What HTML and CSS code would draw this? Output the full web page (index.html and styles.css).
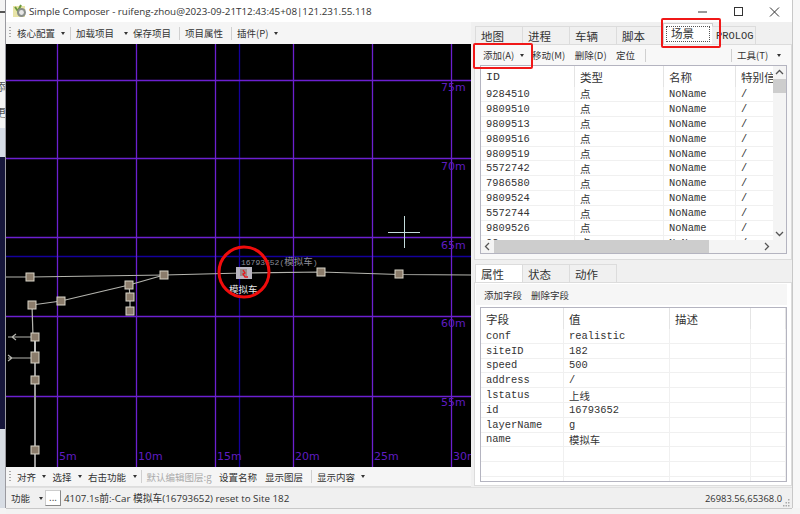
FILE: index.html
```html
<!DOCTYPE html>
<html lang="zh-CN">
<head>
<meta charset="utf-8">
<title>Simple Composer</title>
<link rel="stylesheet" href="styles.css">
</head>
<body>
<div class="screen">
  <div class="upper">
    <div class="strip">
      <div class="strip-top"><span class="peek">添</span><span class="peek">更</span></div>
      <div class="strip-pale"></div>
      <div class="strip-dark"></div>
      <div class="strip-light"></div>
    </div>
    <div class="window">
      <header class="titlebar">
        <svg class="appicon" width="14" height="14" viewBox="0 0 14 14"><rect x="0" y="2" width="12" height="11" fill="#e8e4a8"/><path d="M2 3l3 4 3-6" stroke="#6b9a3c" stroke-width="2" fill="none"/><circle cx="8.500" cy="8.500" r="4.500" fill="#8a8f8a"/><circle cx="8.500" cy="8.500" r="2.400" fill="#e8e8e8"/></svg>
        <span class="title">Simple Composer - ruifeng-zhou@2023-09-21T12:43:45+08|121.231.55.118</span>
        <div class="winbtns">
          <svg width="36" height="22" viewBox="0 0 36 22"><path d="M14 12h9" stroke="#333"/></svg>
          <svg width="36" height="22" viewBox="0 0 36 22"><rect x="14.500" y="7.500" width="8" height="8" fill="none" stroke="#333"/></svg>
          <svg width="36" height="22" viewBox="0 0 36 22"><path d="M14 7.500l9 9M23 7.500l-9 9" stroke="#333"/></svg>
        </div>
      </header>
      <div class="content">
        <section class="left">
          <div class="toolbar tb-top">
            <i class="grip"></i>
            <span class="tool t-core">核心配置<b class="caret"></b></span><i class="sep"></i>
            <span class="tool t-load">加载项目<b class="caret"></b></span>
            <span class="tool">保存项目</span><i class="sep"></i>
            <span class="tool">项目属性</span><i class="sep"></i>
            <span class="tool t-plugin">插件(P)<b class="caret"></b></span>
          </div>
          <svg class="map" width="465" height="423" viewBox="6 44 465 423">
            <g stroke="#14009c" stroke-width="1.300"><path d="M239.500 44v423M6 256.500h465"/></g>
            <g stroke="#6c20d0" stroke-width="1.300"><path d="M57.500 44v423M136.500 44v423M215.500 44v423M293.500 44v423M372.500 44v423M451.500 44v423M6 80.500h465M6 158.500h465M6 237.500h465M6 316.500h465M6 396.500h465"/></g>
            <g fill="#5f1cc0" font-size="11">
              <text x="441" y="91">75m</text><text x="441" y="170">70m</text><text x="441" y="249">65m</text><text x="441" y="327">60m</text><text x="441" y="406">55m</text>
              <text x="59" y="460">5m</text><text x="138" y="460">10m</text><text x="217" y="460">15m</text><text x="295" y="460">20m</text><text x="374" y="460">25m</text><text x="453" y="460">30m</text>
            </g>
            <g stroke="#b4b4ae" stroke-width="1.200" fill="none">
              <path d="M6 277H30L164 275 243 273 321 272 399 274.500 471 275"/>
              <path d="M32 305L61 301 129 285 164 275"/>
              <path d="M129 285L130 297V311"/>
              <path d="M32 305L33 337"/>
              <path d="M35 337H8M16 334l-4 3 4 3"/>
              <path d="M35 358H8M8 355l4 3-4 3"/>
              <path d="M35 337V358" stroke="#fff" stroke-width="1.500"/>
              <path d="M35 358V467" stroke="#999" stroke-width="2"/>
            </g>
            <g fill="#8b7c6b" stroke="#d8d4c8" stroke-width="1">
              <rect x="26" y="273" width="8" height="8"/><rect x="160" y="271" width="8" height="8"/><rect x="125" y="281" width="8" height="8"/><rect x="126" y="293" width="8" height="8"/><rect x="126" y="307" width="8" height="8"/><rect x="28" y="301" width="8" height="8"/><rect x="57" y="297" width="8" height="8"/><rect x="31" y="333" width="8" height="8"/><rect x="31" y="352" width="8" height="11"/><rect x="31" y="376" width="8" height="8"/><rect x="31" y="446" width="8" height="8"/><rect x="317" y="268" width="8" height="8"/><rect x="395" y="270" width="8" height="8"/>
            </g>
            <path d="M404.500 216V248M388 232.500H420" stroke="#c4dcdc" stroke-width="1"/>
            <rect x="236" y="267" width="16" height="12" fill="#b9b5c0"/>
            <rect x="240" y="269" width="7" height="7" fill="#9a8a88"/>
            <path d="M243 270l2 3-2 1 2 3h3" stroke="#e8141c" stroke-width="1.300" fill="none"/>
            <text class="carid" x="241" y="265">16793652(<tspan class="carid-cjk">模拟车</tspan>)</text>
            <text class="carname" x="229" y="293">模拟车</text>
            <circle cx="244" cy="272" r="25" fill="none" stroke="#f00c0c" stroke-width="3"/>
          </svg>
          <div class="toolbar tb-bottom">
            <i class="grip"></i>
            <span class="tool t-short">对齐<b class="caret"></b></span>
            <span class="tool t-short">选择<b class="caret"></b></span>
            <span class="tool t-right">右击功能<b class="caret"></b></span><i class="sep"></i>
            <span class="tool muted">默认编辑图层:g</span>
            <span class="tool">设置名称</span>
            <span class="tool">显示图层</span><i class="sep"></i>
            <span class="tool t-show">显示内容<b class="caret"></b></span>
          </div>
        </section>
        <section class="right">
          <div class="tabs tabs-top">
            <span class="tab">地图</span><span class="tab">进程</span><span class="tab">车辆</span><span class="tab">脚本</span><span class="tab tab-current"><span class="focus">场景</span></span><span class="tab tab-last">PROLOG</span>
          </div>
          <div class="pane pane-top">
            <div class="panebar panebar-top">
              <span class="tool tool-first">添加(A)<b class="caret"></b></span>
              <span class="tool">移动(M)</span>
              <span class="tool">删除(D)</span>
              <span class="tool">定位</span><i class="sep"></i>
              <span class="spacer"></span><i class="sep"></i>
              <span class="tool tool-last">工具(T)<b class="caret"></b></span>
            </div>
            <div class="listbox">
              <div class="listmain">
                <div class="cells head cols-a"><span>ID</span><span>类型</span><span>名称</span><span>特别信</span></div>
                <div class="cells cols-a"><span>9284510</span><span>点</span><span>NoName</span><span>/</span></div>
                <div class="cells cols-a"><span>9809510</span><span>点</span><span>NoName</span><span>/</span></div>
                <div class="cells cols-a"><span>9809513</span><span>点</span><span>NoName</span><span>/</span></div>
                <div class="cells cols-a"><span>9809516</span><span>点</span><span>NoName</span><span>/</span></div>
                <div class="cells cols-a"><span>9809519</span><span>点</span><span>NoName</span><span>/</span></div>
                <div class="cells cols-a"><span>5572742</span><span>点</span><span>NoName</span><span>/</span></div>
                <div class="cells cols-a"><span>7986580</span><span>点</span><span>NoName</span><span>/</span></div>
                <div class="cells cols-a"><span>9809524</span><span>点</span><span>NoName</span><span>/</span></div>
                <div class="cells cols-a"><span>5572744</span><span>点</span><span>NoName</span><span>/</span></div>
                <div class="cells cols-a"><span>9809526</span><span>点</span><span>NoName</span><span>/</span></div>
                <div class="cells cols-a"><span>98</span><span>点</span><span>NoName</span><span>/</span></div>
              </div>
              <div class="vscroll">
                <svg width="13" height="13" viewBox="0 0 13 13"><path d="M3 8l3.500-3.500L10 8" fill="none" stroke="#555" stroke-width="1.300"/></svg>
                <div class="vtrack"><div class="vthumb"></div></div>
                <svg width="13" height="13" viewBox="0 0 13 13"><path d="M3 5l3.500 3.500L10 5" fill="none" stroke="#555" stroke-width="1.300"/></svg>
              </div>
              <div class="hscroll">
                <svg width="13" height="13" viewBox="0 0 13 13"><path d="M8 3L4.500 6.500 8 10" fill="none" stroke="#555" stroke-width="1.300"/></svg>
                <div class="hthumb"></div>
                <span class="spacer"></span>
                <svg class="hnext" width="13" height="13" viewBox="0 0 13 13"><path d="M5 3l3.500 3.500L5 10" fill="none" stroke="#555" stroke-width="1.300"/></svg>
              </div>
            </div>
          </div>
          <div class="tabs tabs-lower">
            <span class="tab tab-active">属性</span><span class="tab">状态</span><span class="tab">动作</span>
          </div>
          <div class="pane pane-lower">
            <div class="panebar panebar-lower">
              <span class="tool">添加字段</span>
              <span class="tool">删除字段</span>
            </div>
            <div class="fieldbox">
              <div class="cells head cols-b"><span>字段</span><span>值</span><span>描述</span><span></span></div>
              <div class="cells cols-b"><span>conf</span><span>realistic</span><span></span><span></span></div>
              <div class="cells cols-b"><span>siteID</span><span>182</span><span></span><span></span></div>
              <div class="cells cols-b"><span>speed</span><span>500</span><span></span><span></span></div>
              <div class="cells cols-b"><span>address</span><span>/</span><span></span><span></span></div>
              <div class="cells cols-b"><span>lstatus</span><span>上线</span><span></span><span></span></div>
              <div class="cells cols-b"><span>id</span><span>16793652</span><span></span><span></span></div>
              <div class="cells cols-b"><span>layerName</span><span>g</span><span></span><span></span></div>
              <div class="cells cols-b"><span>name</span><span>模拟车</span><span></span><span></span></div>
              <div class="cells cols-b"><span></span><span></span><span></span><span></span></div>
              <div class="cells cols-b"><span></span><span></span><span></span><span></span></div>
              <div class="cells cols-b"><span></span><span></span><span></span><span></span></div>
            </div>
          </div>
        </section>
      </div>
      <footer class="statusbar">
        <span class="tool t-func">功能<b class="caret"></b></span>
        <span class="morebtn">...</span>
        <span class="message">4107.1s前:-Car 模拟车(16793652) reset to Site 182</span>
        <span class="spacer"></span>
        <span class="coords">26983.56,65368.0</span>
        <svg class="sizegrip" width="8" height="8" viewBox="0 0 8 8" fill="#aaa"><rect x="5" y="0" width="1.500" height="1.500"/><rect x="2.500" y="3" width="1.500" height="1.500"/><rect x="5" y="3" width="1.500" height="1.500"/><rect x="0" y="6" width="1.500" height="1.500"/><rect x="2.500" y="6" width="1.500" height="1.500"/><rect x="5" y="6" width="1.500" height="1.500"/></svg>
      </footer>
      <i class="mark mark-tab"></i>
      <i class="mark mark-add"></i>
    </div>
    <div class="rstrip"></div>
  </div>
  <div class="lower"></div>
</div>
</body>
</html>
```

FILE: styles.css
```css
* { box-sizing: border-box; }
html, body { margin: 0; padding: 0; }
body { width: 800px; height: 514px; overflow: hidden; background: #f4f4f4; color: #333; font-family: "Noto Sans CJK SC", "Noto Sans", sans-serif; font-size: 9.5px; }
.screen { display: flex; flex-direction: column; width: 800px; height: 514px; }
.upper { display: flex; height: 508px; }
.lower { height: 6px; background: #f3f3f3; border-top: 1px solid #c8c8c8; margin-left: 6px; margin-right: 8px; }

.strip { width: 6px; display: flex; flex-direction: column; overflow: hidden; border-right: 1px solid #9a9aa0; }
.strip-top { height: 128px; background: linear-gradient(#f4f4f4 11px, #555 11px, #555 13px, #f4f4f4 13px); display: flex; flex-direction: column; align-items: flex-end; padding-top: 80px; gap: 13px; }
.peek { font-size: 11px; line-height: 13px; width: 11px; margin-right: -1px; flex: none; color: #555; }
.strip-pale { height: 29px; background: #d6dce6; }
.strip-dark { height: 272px; background: #16163a; }
.strip-light { flex: 1; background: #d8dde4; }
.rstrip { width: 8px; background: #f7f7f7; border-left: 1px solid #c8c8c8; }

.window { position: relative; width: 786px; display: flex; flex-direction: column; background: #f0f0f0; }
.titlebar { height: 22px; background: #fff; display: flex; align-items: center; padding-left: 7px; }
.appicon { flex: none; }
.title { margin-left: 2px; font-family: "Open Sans", sans-serif; font-size: 9.800px; color: #333; white-space: nowrap; }
.winbtns { margin-left: auto; display: flex; }

.content { flex: 1; display: flex; min-height: 0; }
.left { width: 465px; display: flex; flex-direction: column; }
.map { display: block; background: #000; flex: none; }
.map text { font-family: "DejaVu Sans", "Noto Sans CJK SC", sans-serif; }
.map .carid { font-family: "Liberation Mono", "Noto Sans CJK SC", monospace; font-size: 8px; fill: #8c8c98; }
.map .carid-cjk { font-family: "Noto Sans CJK SC", sans-serif; font-size: 9.500px; }
.map .carname { font-family: "Noto Sans CJK SC", sans-serif; font-size: 9.500px; fill: #e8e8e8; }

.toolbar { display: flex; align-items: center; background: #f5f5f5; white-space: nowrap; }
.tb-top { height: 22px; padding-left: 3px; }
.tb-bottom { height: 20px; padding-left: 3px; border-bottom: 1px solid #ddd; }
.grip { width: 2px; height: 12px; margin-right: 6px; flex: none; background: repeating-linear-gradient(#aaa 0 1px, transparent 1px 3px); }
.tool { display: inline-flex; align-items: center; white-space: nowrap; margin-right: 8px; }
.tool.muted { color: #aaa; margin-right: 7.500px; }
.caret { width: 0; height: 0; margin-left: auto; border: 2.500px solid transparent; border-top: 3px solid #333; border-bottom: 0; }
.t-core { width: 48px; margin-right: 5px; }
.t-load { width: 52px; margin-right: 5px; }
.t-plugin { width: 41px; }
.t-short { width: 29px; margin-right: 6.500px; }
.t-right { width: 48.500px; margin-right: 4px; }
.t-show { width: 48px; }
.t-func { width: 32px; margin-right: 2px; }
.sep { width: 1px; height: 13px; background: #d0d0d0; margin-right: 5px; flex: none; }

.right { width: 321px; padding-left: 3px; padding-top: 4px; display: flex; flex-direction: column; }
.tabs { display: flex; align-items: flex-end; height: 18px; padding-left: 1px; font-size: 11.5px; }
.tab { width: 48px; height: 18px; display: flex; align-items: center; padding-left: 5px; background: #f0f0f0; border: 1px solid #dcdcdc; border-bottom: 0; margin-right: -1px; flex: none; }
.tab-current { width: 50px; height: 21px; background: #fff; padding: 2px 2px 3px 2px; border-color: #d0d0d0; }
.focus { flex: 1; height: 16px; border: 1px dotted #555; padding-left: 4px; display: flex; align-items: center; line-height: 1; }
.tab-last { width: 44px; font-family: "Liberation Mono", monospace; font-size: 10.400px; padding-left: 4px; border-left: 0; }
.tab-active { background: #fff; }
.pane { border: 1px solid #dcdcdc; background: #f8f8f8; display: flex; flex-direction: column; }
.pane-top { height: 216px; padding: 0 4px 5px 5px; }
.pane-lower { height: 204px; padding: 1px 4px 3px 5px; background: #fff; }
.tabs-lower { margin-top: 4px; }
.panebar { height: 20px; flex: none; display: flex; align-items: center; white-space: nowrap; margin-left: -4px; padding-left: 4px; }
.panebar-top { padding-right: 6px; }
.panebar .tool { margin-right: 9.500px; }
.panebar .tool-first { width: 41px; margin-left: 3px; margin-right: 8px; }
.panebar .tool-last { width: 44px; margin-right: 0; }
.panebar-lower { height: 21px; margin-bottom: 2px; background: #f6f6f6; padding-left: 8px; }
.panebar-lower .tool { margin-right: 9px; }
.spacer { flex: 1; }

.listbox { flex: 1; min-height: 0; display: grid; grid-template-columns: 1fr 13px; grid-template-rows: 1fr 13px; border: 1px solid #b4b4c0; background: #fff; overflow: hidden; }
.listmain { overflow: hidden; min-width: 0; }
.cells { display: grid; height: 14.800px; align-items: center; font-family: "Liberation Mono", "Noto Sans CJK SC", monospace; font-size: 10.400px; color: #333; border-bottom: 1px solid #f0f0f0; }
.listmain .cells { height: 14.900px; }
.cells > span { height: 100%; padding-left: 5px; display: flex; align-items: center; border-right: 1px solid #f0f0f0; overflow: hidden; white-space: nowrap; }
.cells.head { font-size: 11.500px; border-bottom: 0; }
.cells.head > span { border-right-color: #e4e4e4; }
.listmain .head { height: 21px; }
.fieldbox .head { height: 21px; }
.cols-a { grid-template-columns: 94px 89px 72px 52px; width: 293px; }
.cols-b { grid-template-columns: 83px 106px 81px 35px; }
.vscroll { background: #f4f4f4; display: flex; flex-direction: column; }
.vtrack { flex: 1; }
.vthumb { height: 14px; background: #cdcdcd; }
.hscroll { grid-column: 1 / span 2; background: #f4f4f4; display: flex; }
.hthumb { width: 215px; background: #cdcdcd; }
.hnext { margin-right: 13px; }
.fieldbox { flex: 1; min-height: 0; border: 1px solid #b4b4c0; background: #fff; overflow: hidden; }

.statusbar { position: relative; height: 21px; flex: none; display: flex; align-items: center; background: #f0f0f0; border-top: 1px solid #e0e0e0; padding-left: 5px; padding-right: 1px; }
.morebtn { width: 16px; height: 16px; background: #fff; border: 1px solid #ccc; border-right-color: #888; border-bottom-color: #888; text-align: center; line-height: 13px; margin-right: 3px; }
.message, .coords { font-family: "Open Sans", "Noto Sans CJK SC", sans-serif; white-space: nowrap; }
.message { font-size: 9.800px; }
.coords { margin-right: 1px; font-size: 9.400px; }
.sizegrip { align-self: flex-end; margin-bottom: 1px; }

.mark { position: absolute; border: 2px solid #f01818; border-radius: 2px; }
.mark-tab { left: 655px; top: 18px; width: 60px; height: 30px; }
.mark-add { left: 467px; top: 43px; width: 60px; height: 26px; }
```
